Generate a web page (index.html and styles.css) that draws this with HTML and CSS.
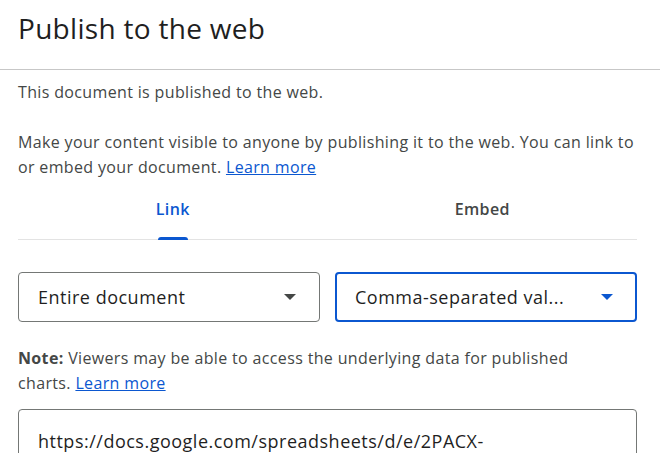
FILE: index.html
```html
<!DOCTYPE html>
<html lang="en">

<head>
    <meta charset="UTF-8">
    <meta name="viewport" content="width=device-width, initial-scale=1.0">
    <title>Publish to the web</title>
    <link rel="stylesheet" href="styles.css">
</head>

<body>
    <div class="dialog">
        <div class="dialog-title">Publish to the web</div>
        <div class="dialog-body">
            <p class="status">This document is published to the web.</p>
            <p class="intro">Make your content visible to anyone by publishing it to the web. You can link to or embed your document. <a href="#" class="link">Learn more</a></p>

            <ul class="tabs">
                <li class="tab active">Link</li>
                <li class="tab">Embed</li>
            </ul>

            <div class="selects">
                <div class="select">
                    <span class="select-text">Entire document</span>
                    <span class="caret"></span>
                </div>
                <div class="select focused">
                    <span class="select-text">Comma-separated val...</span>
                    <span class="caret"></span>
                </div>
            </div>

            <p class="note"><b>Note:</b> Viewers may be able to access the underlying data for published charts. <a href="#" class="link">Learn more</a></p>

            <div class="url-box">https://docs.google.com/spreadsheets/d/e/2PACX-</div>
        </div>
    </div>
</body>

</html>
```

FILE: styles.css
```css
* {
    margin: 0;
    padding: 0;
    box-sizing: border-box;
}

li {
    list-style: none;
}

body {
    background: #fff;
    font-family: "Open Sans", "Noto Sans", sans-serif;
    color: #1f1f1f;
    overflow: hidden;
}

.dialog {
    width: 660px;
}

.dialog-title {
    height: 70px;
    padding: 10px 18px 0;
    font-size: 28px;
    line-height: 36px;
    letter-spacing: 0.3px;
    color: #1f1f1f;
    border-bottom: 1px solid #c7c7c7;
}

.dialog-body {
    padding: 0 23px 0 18px;
    letter-spacing: 0.35px;
}

.status {
    margin-top: 11px;
    font-size: 16px;
    line-height: 22px;
    color: #444746;
}

.intro {
    margin-top: 27px;
    font-size: 16px;
    line-height: 25px;
    color: #444746;
}

.link {
    color: #0b57d0;
}

.tabs {
    display: flex;
    margin-top: 10px;
    border-bottom: 1px solid #e3e3e3;
}

.tab {
    flex: 1;
    height: 49px;
    padding-top: 8px;
    text-align: center;
    font-size: 16px;
    font-weight: 600;
    color: #444746;
    position: relative;
}

.tab.active {
    color: #0b57d0;
}

.tab.active::after {
    content: "";
    position: absolute;
    left: 50%;
    bottom: -1px;
    width: 30px;
    height: 3px;
    margin-left: -15px;
    background: #0b57d0;
    border-radius: 3px 3px 0 0;
}

.selects {
    display: flex;
    gap: 15px;
    margin-top: 32px;
}

.select {
    flex: 1;
    height: 50px;
    display: flex;
    align-items: center;
    justify-content: space-between;
    padding: 0 23px 0 19px;
    border: 1px solid #747775;
    border-radius: 4px;
    font-size: 18px;
    letter-spacing: 0.5px;
}

.select.focused {
    border: 2px solid #0b57d0;
    padding: 0 22px 0 18px;
}

.caret {
    width: 0;
    height: 0;
    border-left: 6px solid transparent;
    border-right: 6px solid transparent;
    border-top: 6px solid #444746;
}

.focused .caret {
    border-top-color: #0b57d0;
}

.note {
    margin-top: 24px;
    padding-right: 12px;
    font-size: 16px;
    line-height: 25px;
    color: #444746;
}

.note b {
    font-weight: 700;
}

.url-box {
    margin-top: 13px;
    height: 80px;
    padding: 18px 19px;
    border: 1px solid #747775;
    border-radius: 4px;
    font-size: 18px;
    line-height: 26px;
    letter-spacing: 0.5px;
    color: #1f1f1f;
}
```
